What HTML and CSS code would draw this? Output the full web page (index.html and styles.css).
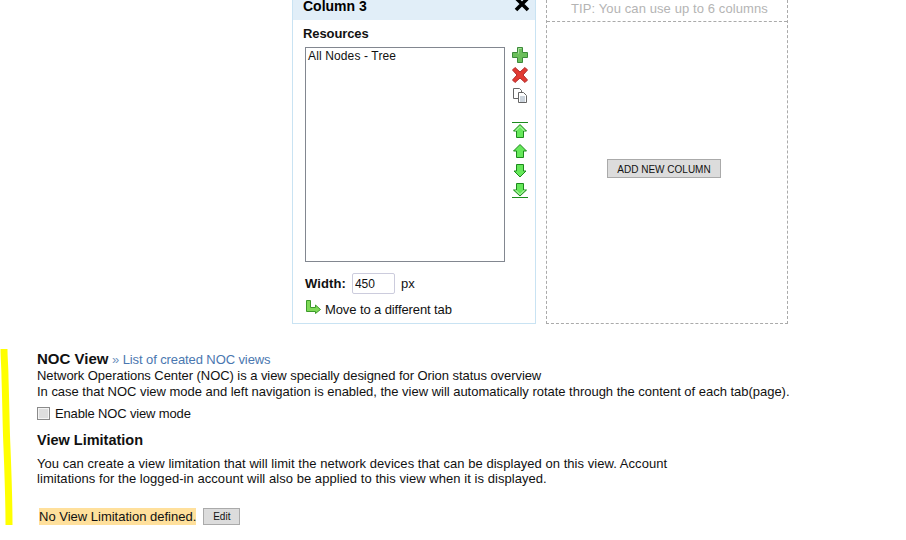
FILE: index.html
```html
<!DOCTYPE html>
<html>
<head>
<meta charset="UTF-8">
<title>Customize View</title>
<link rel="stylesheet" href="styles.css">
</head>
<body>

<svg class="marker" width="14" height="180" viewBox="0 0 14 180">
	<path d="M4 1 C4 10 5 20 5 30 C6 60 6 80 7 100 C8 125 9 150 9 177" fill="none" stroke="#ffff00" stroke-width="7"/>
</svg>

<div class="columns">
	<div class="column">
		<div class="column-head">
			<span class="column-title">Column 3</span>
			<svg class="close" width="16" height="16" viewBox="0 0 16 16"><path d="M2 1 L14 13 M14 1 L2 13" stroke="#000" stroke-width="3.6"/></svg>
		</div>
		<div class="column-body">
			<div class="label label-res">Resources</div>
			<div class="resources">
				<div class="listbox">All Nodes - Tree</div>
				<div class="tools">
					<svg width="16" height="16" viewBox="0 0 16 16"><path d="M5.5 .5h5v5h5v5h-5v5h-5v-5h-5v-5h5z" fill="#6cbf5c" stroke="#3c8a3a"/><path d="M6.5 6.5v-5h3" fill="none" stroke="#a8e09c"/></svg>
					<svg width="16" height="16" viewBox="0 0 16 16"><path d="M3 .5 L8 5 L13 .5 L15.5 3 L11 8 L15.5 13 L13 15.5 L8 11 L3 15.5 L.5 13 L5 8 L.5 3z" fill="#e23a32" stroke="#b02a2a"/></svg>
					<svg width="16" height="16" viewBox="0 0 16 16"><path d="M1.5 1.5h6l2 2v8h-8z" fill="#fff" stroke="#666"/><path d="M6.5 5.5h5l3 3v7h-8z" fill="#fff" stroke="#666"/><path d="M8 10h5M8 12h5M8 14h5" stroke="#9ab"/></svg>
					<div class="gap"></div>
					<svg width="16" height="16" viewBox="0 0 16 16"><path d="M0 .5h16" stroke="#1c8a1c"/><path d="M8 2.5 L14.5 9 H11.5 V15.5 H4.5 V9 H1.5z" fill="#66e85a" stroke="#1c8a1c"/><path d="M3.5 9 L8 4.5 L12.5 9" fill="none" stroke="#c8f8c0"/></svg>
					<svg width="16" height="16" viewBox="0 0 16 16"><path d="M8 2.5 L14.5 9 H11.5 V15.5 H4.5 V9 H1.5z" fill="#66e85a" stroke="#1c8a1c"/></svg>
					<svg width="16" height="16" viewBox="0 0 16 16"><path d="M8 15 L14 9 H11.5 V2.5 H4.5 V9 H2z" fill="#66e85a" stroke="#1c8a1c"/></svg>
					<svg width="16" height="16" viewBox="0 0 16 16"><path d="M0 15.5h16" stroke="#1c8a1c"/><path d="M8 14 L14.5 8 H11.5 V1.5 H4.5 V8 H1.5z" fill="#66e85a" stroke="#1c8a1c"/><path d="M3.5 8 L8 12.5 L12.5 8" fill="none" stroke="#c8f8c0"/></svg>
				</div>
			</div>
			<div class="width-row">
				<span class="label">Width:</span>
				<input class="width-input" type="text" value="450">
				<span>px</span>
			</div>
			<div class="move-row">
				<svg class="move-icon" width="16" height="14" viewBox="0 0 16 14"><path d="M1.5 .5h4v7h5V5l5 4.5-5 4v-2h-9z" fill="#7ed957" stroke="#3c9a2a"/></svg>
				<span class="move-text">Move to a different tab</span>
			</div>
		</div>
	</div>
	<div class="add-column">
		<div class="tip">TIP: You can use up to 6 columns</div>
		<div class="add-area"><button class="btn" type="button">ADD NEW COLUMN</button></div>
	</div>
</div>

<div class="options">
	<div class="noc-head"><span class="title">NOC View</span> <a class="link" href="#"><span class="raquo">»</span> List of created NOC views</a></div>
	<div class="noc-text narrow">Network Operations Center (NOC) is a view specially designed for Orion status overview</div>
	<div class="noc-text">In case that NOC view mode and left navigation is enabled, the view will automatically rotate through the content of each tab(page).</div>
	<label class="check-row"><input class="check" type="checkbox"> <span class="check-text">Enable NOC view mode</span></label>
	<div class="title limit-title">View Limitation</div>
	<div class="limit-text">You can create a view limitation that will limit the network devices that can be displayed on this view. Account<br>limitations for the logged-in account will also be applied to this view when it is displayed.</div>
	<div class="limit-row">
		<span class="highlight">No View Limitation defined.</span>
		<button class="btn btn-edit" type="button">Edit</button>
	</div>
</div>

</body>
</html>
```

FILE: styles.css
```css
html, body { height: 540px; overflow: hidden; }
body { margin: 0; background-color: #fff; color: #111; font-family: "Liberation Sans", Arial, sans-serif; font-size: 13px; line-height: 15px; }

.marker { position: absolute; left: 0; top: 348px; }

.columns { display: flex; gap: 10px; margin-left: 292px; height: 324px; }

.column { width: 242px; border: 1px solid #c9e3f3; border-top: 0; }
.column-head { display: flex; justify-content: space-between; align-items: flex-start; height: 20px; padding: 0 5px 0 10px; background-color: #e1eef8; overflow: hidden; }
.column-title { font-size: 14px; font-weight: bold; line-height: 12px; color: #000; }
.close { margin-top: -3px; }
.column-body { padding: 6px 0 0 10px; }
.label { font-size: 13px; font-weight: bold; line-height: 15px; color: #111; }
.label-res { letter-spacing: -.1px; }

.resources { display: flex; gap: 7px; margin: 6px 0 0 2px; }
.listbox { width: 194px; height: 210px; padding: 1px 2px 2px; border: 1px solid #828790; font-size: 12px; letter-spacing: .13px; }
.tools { display: flex; flex-direction: column; gap: 4px; }
.gap { height: 11px; }

.width-row { display: flex; align-items: center; gap: 6px; margin: 11px 0 0 2px; }
.width-row .label { letter-spacing: .1px; }
.width-input { width: 37px; height: 15px; padding: 2px; border: 1px solid #ccd; border-radius: 2px; font-family: inherit; font-size: 12px; color: #111; }
.move-row { display: flex; gap: 4px; margin: 8px 0 0 2px; }
.move-icon { margin-top: -2px; }
.move-text { letter-spacing: -.1px; }

.add-column { display: flex; flex-direction: column; width: 240px; border: 1px dashed #aaa; border-top: 0; }
.tip { height: 21px; padding-left: 5px; line-height: 17px; border-bottom: 1px dashed #aaa; text-align: center; color: #b4b4b4; letter-spacing: .1px; }
.add-area { display: flex; flex: 1; align-items: center; justify-content: center; padding: 0 6px 9px 0; }

.btn { width: 114px; height: 19px; padding: 2px 0 0; background-color: #dcdcdc; border: 1px solid #aaa; font-family: inherit; font-size: 10px; color: #111; }
.btn-edit { width: 37px; height: 17px; padding: 0; }

.options { margin: 26px 0 0 37px; }
.noc-head { line-height: 17px; }
.noc-text { line-height: 16px; letter-spacing: -.02px; }
.noc-text.narrow { letter-spacing: -.06px; }
.title { font-size: 15px; font-weight: bold; color: #111; }
.link { color: #4a77b0; text-decoration: none; letter-spacing: -.1px; }
.raquo { color: #6f93c0; }
.check-row { display: flex; align-items: center; gap: 5px; margin-top: 6px; }
.check-text { letter-spacing: -.15px; }
.check { appearance: none; width: 13px; height: 13px; margin: 0; background-color: #dedede; border: 1px solid #8a8a8a; box-shadow: inset 0 0 0 1px #f4f4f4; }
.limit-title { margin-top: 11px; font-size: 14.5px; line-height: 17px; }
.limit-text { margin-top: 7px; letter-spacing: .05px; }
.limit-row { display: flex; align-items: center; gap: 7px; margin: 22px 0 0 2px; }
.highlight { padding: 1px 0; background-color: #ffe09c; }
```
